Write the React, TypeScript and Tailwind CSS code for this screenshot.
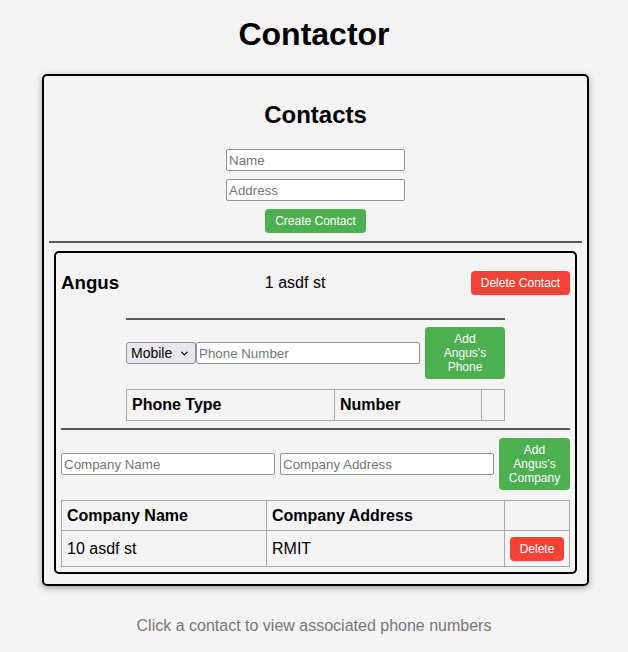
import { ChevronDown } from "lucide-react"

// ─── small building blocks ───────────────────────────────────────────────────

function TextInput({ placeholder, className }: { placeholder: string; className: string }) {
  return (
    <input
      placeholder={placeholder}
      className={
        "h-[22px] px-[2px] bg-white border border-[#8f8f9d] rounded-[2px] text-[13.33px] text-black placeholder:text-[#757575] outline-none " +
        className
      }
    />
  )
}

function GreenButton({ lines, className }: { lines: string[]; className: string }) {
  return (
    <button
      className={
        "flex flex-col items-center justify-center bg-[#4caf50] text-white text-[12px] leading-[14px] rounded-[4px] shrink-0 " +
        className
      }
    >
      {lines.map((l) => (
        <span key={l}>{l}</span>
      ))}
    </button>
  )
}

function Rule({ className = "" }: { className?: string }) {
  return <div className={"h-[2px] bg-[#5a5a5a] " + className} />
}

// ─── App ─────────────────────────────────────────────────────────────────────

export default function App() {
  return (
    <div
      className="min-h-[652px] bg-[#f4f4f4] text-black pt-[16px]"
      style={{ fontFamily: '"Liberation Sans", Arial, sans-serif' }}
    >
      <h1 className="text-center font-bold text-[32px] leading-[37px]">Contactor</h1>

      <div className="mt-[21px] ml-[42px] w-[547px] border-2 border-black rounded-[5px] p-[5px] shadow-[0_2px_6px_rgba(0,0,0,0.35)]">
        <h2 className="mt-[20px] text-center font-bold text-[24px] leading-[28px]">Contacts</h2>

        <div className="mt-[20px] flex flex-col items-center gap-[8px]">
          <TextInput placeholder="Name" className="w-[179px]" />
          <TextInput placeholder="Address" className="w-[179px]" />
          <button className="w-[101px] h-[24px] bg-[#4caf50] text-white text-[12px] rounded-[4px]">
            Create Contact
          </button>
        </div>

        <Rule className="mt-[8px]" />

        {/* contact card */}
        <div className="m-[5px] mt-[8px] border-2 border-black rounded-[5px] p-[5px]">
          <div className="mt-[13px] h-[24px] flex items-center justify-between">
            <span className="font-bold text-[18.72px]">Angus</span>
            <span className="text-[16px]">1 asdf st</span>
            <button className="w-[99px] h-[24px] bg-[#f44336] text-white text-[12px] rounded-[4px]">
              Delete Contact
            </button>
          </div>

          {/* phones */}
          <div className="mx-auto w-[379px]">
            <Rule className="mt-[23px]" />
            <div className="mt-[7px] flex items-center">
              <div className="w-[70px] h-[22px] flex items-center justify-between pl-[4px] pr-[5px] bg-[#e9e9ed] border border-[#8f8f9d] rounded-[3px] text-[14px]">
                <span>Mobile</span>
                <ChevronDown size={11} strokeWidth={2.5} />
              </div>
              <TextInput placeholder="Phone Number" className="w-[224px]" />
              <GreenButton lines={["Add", "Angus's", "Phone"]} className="ml-[5px] w-[80px] h-[52px]" />
            </div>
            <table className="mt-[10px] w-full border-collapse text-[16px]">
              <thead>
                <tr className="h-[31px]">
                  <th className="w-[208px] border border-[#aaa] px-[5px] text-left font-bold">Phone Type</th>
                  <th className="w-[147px] border border-[#aaa] px-[5px] text-left font-bold">Number</th>
                  <th className="border border-[#aaa]" />
                </tr>
              </thead>
            </table>
          </div>

          {/* companies */}
          <Rule className="mt-[7px]" />
          <div className="mt-[8px] flex items-center gap-[5px]">
            <TextInput placeholder="Company Name" className="w-[214px]" />
            <TextInput placeholder="Company Address" className="w-[214px]" />
            <GreenButton lines={["Add", "Angus's", "Company"]} className="w-[71px] h-[52px]" />
          </div>
          <table className="mt-[10px] w-full border-collapse text-[16px]">
            <thead>
              <tr className="h-[30px]">
                <th className="w-[205px] border border-[#aaa] px-[5px] text-left font-bold">Company Name</th>
                <th className="w-[238px] border border-[#aaa] px-[5px] text-left font-bold">Company Address</th>
                <th className="border border-[#aaa]" />
              </tr>
            </thead>
            <tbody>
              <tr className="h-[36px]">
                <td className="border border-[#aaa] px-[5px]">10 asdf st</td>
                <td className="border border-[#aaa] px-[5px]">RMIT</td>
                <td className="border border-[#aaa] px-[5px]">
                  <button className="w-[54px] h-[24px] bg-[#f44336] text-white text-[12px] rounded-[4px]">
                    Delete
                  </button>
                </td>
              </tr>
            </tbody>
          </table>
        </div>
      </div>

      <p className="mt-[31px] text-center text-[16px] leading-[18px] text-[#777]">
        Click a contact to view associated phone numbers
      </p>
    </div>
  )
}
